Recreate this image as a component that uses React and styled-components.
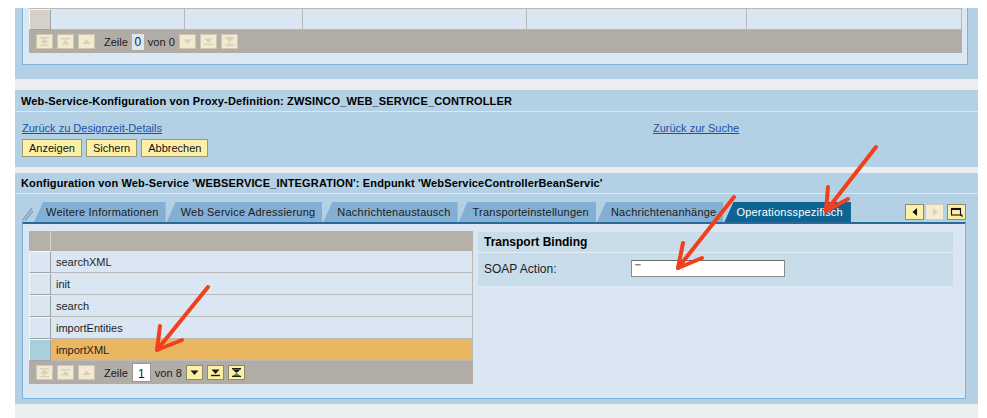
import React from "react";
import styled, { createGlobalStyle } from "styled-components";

const GlobalStyle = createGlobalStyle`
  html, body { margin: 0; padding: 0; background: #ffffff; }
  body {
    font-family: "Liberation Sans", Arial, sans-serif;
    font-size: 11px;
    color: #000;
  }
`;

const Page = styled.div`
  position: relative;
  width: 987px;
  height: 418px;
  overflow: hidden;
  padding: 8px 0 0 15px;
  box-sizing: border-box;
`;

const Column = styled.div`
  width: 963px;
  height: 100%;
  background: #eaeef1;
  display: flex;
  flex-direction: column;
`;

// ---- top (cut off) table area
const TopTray = styled.div`
  background: #b3d0e4;
  padding: 0 10px 14px 7px;
`;

const TopPanel = styled.div`
  background: #dbe7f2;
  border: 1px solid #7fb1db;
  border-top: none;
  padding: 0 5px 11px 6px;
`;

const GridRow = styled.div`
  display: grid;
  grid-template-columns: ${(p) => p.$cols};
  height: 22px;
  box-sizing: border-box;
  border-top: ${(p) => (p.$topLine ? "1px solid #b9b9b9" : "none")};
`;

const Cell = styled.div`
  box-sizing: border-box;
  height: 100%;
  background: ${(p) => p.$bg || "#dae6f2"};
  border-right: 1px solid #b9b9b9;
  border-bottom: 1px solid #b9b9b9;
  display: flex;
  align-items: center;
  padding-left: 5px;
  color: #1e1e1e;
`;

const Selector = styled.div`
  box-sizing: border-box;
  height: 100%;
  background: ${(p) => p.$bg || "#dae6f2"};
  border-top: 1px solid #f4f8fb;
  border-left: 1px solid #f4f8fb;
  border-right: 1px solid #9fa4a8;
  border-bottom: 1px solid #9fa4a8;
`;

const Pager = styled.div`
  height: 23px;
  background: #b1ada6;
  display: flex;
  align-items: center;
  padding-left: 7px;
  gap: 4px;
  color: #1a1a1a;
`;

const PagerButton = styled.div`
  box-sizing: border-box;
  width: 17px;
  height: 15px;
  border: 1px solid ${(p) => (p.$on ? "#8c8a70" : "#cdc7b6")};
  background: ${(p) => (p.$on ? "#fdf0a2" : "#f2e9d0")};
  display: flex;
  align-items: center;
  justify-content: center;
`;

const PagerLabel = styled.span`
  margin-left: ${(p) => p.$ml || 0}px;
`;

const PagerInput = styled.div`
  box-sizing: border-box;
  width: ${(p) => p.$w}px;
  height: ${(p) => p.$h}px;
  background: ${(p) => p.$bg};
  border: 1px solid ${(p) => p.$border};
  display: flex;
  align-items: flex-end;
  justify-content: center;
  font-size: 12px;
  line-height: 14px;
`;

// ---- sections
const SectionHeader = styled.div`
  margin-top: ${(p) => p.$mt}px;
  height: ${(p) => p.$h}px;
  background: #b3d0e4;
  border-bottom: 1px solid #d9e7f1;
  font-weight: bold;
  font-size: 11px;
  letter-spacing: 0.15px;
  display: flex;
  align-items: center;
  padding-left: 6px;
`;

const DesignContent = styled.div`
  height: 55px;
  box-sizing: border-box;
  background: #b3d0e4;
  padding: 10px 7px 0 7px;
`;

const LinkRow = styled.div`
  display: grid;
  grid-template-columns: 631px auto;
  height: 16px;
`;

const Link = styled.a`
  color: #1d4fa6;
  text-decoration: underline;
  cursor: pointer;
`;

const ButtonRow = styled.div`
  display: flex;
  gap: 4px;
  margin-top: 1px;
`;

const Button = styled.div`
  box-sizing: border-box;
  height: 18px;
  padding: 0 6px;
  border: 1px solid #9a9878;
  background: #fdf1a8;
  display: flex;
  align-items: center;
  color: #111;
`;

const ConfigContent = styled.div`
  height: 210px;
  box-sizing: border-box;
  background: #b3d0e4;
  padding: 8px 12px 5px 7px;
  display: flex;
  flex-direction: column;
`;

const TabStrip = styled.div`
  height: 20px;
  display: flex;
  align-items: stretch;
`;

const TabCap = styled.div`
  width: 11px;
  display: flex;
  align-items: flex-end;
`;

const Tab = styled.div`
  margin-left: 1px;
  padding: 0 ${(p) => (p.$active ? 8 : 7)}px 0 ${(p) => (p.$first || p.$active ? 12 : 14)}px;
  background: ${(p) => (p.$active ? "#0e6593" : "#84afd5")};
  color: ${(p) => (p.$active ? "#fff" : "#1a1a1a")};
  clip-path: polygon(9px 0, 100% 0, 100% 100%, 0 100%);
  letter-spacing: 0.22px;
  display: flex;
  align-items: center;
  white-space: nowrap;
`;

const TabNav = styled.div`
  margin-left: auto;
  padding-top: 2px;
  display: flex;
  gap: 1px;
`;

const NavButton = styled.div`
  box-sizing: border-box;
  width: 19px;
  height: 16px;
  margin-left: ${(p) => p.$ml || 0}px;
  border: 1px solid ${(p) => (p.$on ? "#8f8c6c" : "#d3ccb4")};
  background: ${(p) => (p.$on ? "#fdf0a6" : "#f3ebd2")};
  display: flex;
  align-items: center;
  justify-content: center;
`;

const TabPanel = styled.div`
  flex: 1;
  background: #dae6f2;
  border: 1px solid #7fb1db;
  border-top: 2px solid #2a6a98;
  padding: 7px 9px 0 6px;
  display: flex;
  align-items: flex-start;
  gap: 5px;
`;

const OpTable = styled.div`
  width: 444px;
`;

const HeadRow = styled.div`
  display: grid;
  grid-template-columns: 22px 1fr;
  height: 20px;
  background: #b5b0a8;
`;

const HeadCell = styled.div`
  border-right: 1px solid #d8d4cc;
  &:last-child { border-right: none; }
`;

const BindingBox = styled.div`
  width: 475px;
  margin-top: 1px;
`;

const BindingHead = styled.div`
  height: 21px;
  box-sizing: border-box;
  background: #c9dcea;
  border-bottom: 1px solid #e6eef5;
  font-weight: bold;
  font-size: 12px;
  display: flex;
  align-items: center;
  padding-left: 6px;
`;

const BindingRow = styled.div`
  height: 33px;
  box-sizing: border-box;
  background: #c9dcea;
  padding: 7px 0 0 6px;
  display: grid;
  grid-template-columns: 147px 154px;
`;

const FieldLabel = styled.span`
  padding-top: 2px;
  font-size: 12px;
  color: #1c1c1c;
`;

const TextField = styled.div`
  box-sizing: border-box;
  height: 17px;
  background: #fff;
  border: 1px solid #8a8a8a;
  border-top-color: #6d6d6d;
  padding: 0 3px;
  font-size: 8px;
  line-height: 12px;
`;

const Annotations = styled.svg`
  position: absolute;
  left: 0;
  top: 0;
  pointer-events: none;
`;

// ---- icons
const PagerIcon = ({ kind, on }) => {
  const c = on ? "#1c1c1c" : "#d8cfb4";
  const shapes = {
    first: (
      <>
        <rect x="0" y="0" width="9" height="1.4" />
        <path d="M4.5 1.6 L8.5 5 H0.5 Z" />
        <path d="M0.5 5 H8.5 L4.5 8.4 Z" opacity="0.6" />
        <rect x="0" y="8" width="9" height="1" />
      </>
    ),
    pageUp: (
      <>
        <rect x="0" y="1" width="9" height="1.4" />
        <path d="M4.5 3 L8.5 7.5 H0.5 Z" />
      </>
    ),
    up: <path d="M4.5 2.5 L8.5 7 H0.5 Z" />,
    down: <path d="M0.5 2.5 H8.5 L4.5 7 Z" />,
    pageDown: (
      <>
        <path d="M0.5 1.5 H8.5 L4.5 6 Z" />
        <rect x="0" y="6.8" width="9" height="1.4" />
      </>
    ),
    last: (
      <>
        <rect x="0" y="0" width="9" height="1.4" />
        <path d="M0.5 1.6 H8.5 L4.5 5 Z" />
        <path d="M4.5 5 L8.5 8 H0.5 Z" opacity="0.6" />
        <rect x="0" y="7.8" width="9" height="1.2" />
      </>
    ),
  };
  return (
    <svg width="9" height="9" viewBox="0 0 9 9" fill={c}>
      {shapes[kind]}
    </svg>
  );
};

const PagerBar = ({ total, on, input }) => (
  <Pager>
    <PagerButton><PagerIcon kind="first" /></PagerButton>
    <PagerButton><PagerIcon kind="pageUp" /></PagerButton>
    <PagerButton><PagerIcon kind="up" /></PagerButton>
    <PagerLabel $ml={5}>Zeile</PagerLabel>
    {input}
    <PagerLabel>von {total}</PagerLabel>
    <PagerButton $on={on}><PagerIcon kind="down" on={on} /></PagerButton>
    <PagerButton $on={on}><PagerIcon kind="pageDown" on={on} /></PagerButton>
    <PagerButton $on={on}><PagerIcon kind="last" on={on} /></PagerButton>
  </Pager>
);

const Arrow = ({ from, tip, armA, armB }) => (
  <g>
    <line x1={from[0]} y1={from[1]} x2={tip[0]} y2={tip[1]} />
    <polyline points={`${armA[0]},${armA[1]} ${tip[0]},${tip[1]} ${armB[0]},${armB[1]}`} fill="none" />
  </g>
);

const operations = ["searchXML", "init", "search", "importEntities", "importXML"];
const tabs = [
  "Weitere Informationen",
  "Web Service Adressierung",
  "Nachrichtenaustausch",
  "Transporteinstellungen",
  "Nachrichtenanhänge",
];

export default function App() {
  return (
    <>
      <GlobalStyle />
      <Page>
        <Column>
          <TopTray>
            <TopPanel>
              <GridRow $topLine $cols="22px 134px 118px 224px 220px 1fr">
                <Selector $bg="#d5d1c9" />
                <Cell />
                <Cell />
                <Cell />
                <Cell />
                <Cell />
              </GridRow>
              <PagerBar
                total={0}
                on={false}
                input={
                  <PagerInput $w={12} $h={16} $bg="#dbe7f2" $border="#dbe7f2">
                    0
                  </PagerInput>
                }
              />
            </TopPanel>
          </TopTray>

          <SectionHeader $mt={11} $h={21}>
            Web-Service-Konfiguration von Proxy-Definition: ZWSINCO_WEB_SERVICE_CONTROLLER
          </SectionHeader>
          <DesignContent>
            <LinkRow>
              <Link>Zurück zu Designzeit-Details</Link>
              <Link>Zurück zur Suche</Link>
            </LinkRow>
            <ButtonRow>
              <Button>Anzeigen</Button>
              <Button>Sichern</Button>
              <Button>Abbrechen</Button>
            </ButtonRow>
          </DesignContent>

          <SectionHeader $mt={6} $h={20}>
            Konfiguration von Web-Service 'WEBSERVICE_INTEGRATION': Endpunkt 'WebServiceControllerBeanServic'
          </SectionHeader>
          <ConfigContent>
            <TabStrip>
              <TabCap>
                <svg width="11" height="20" viewBox="0 0 11 20">
                  <path d="M0 19 L10 6 M3 19 L11 9" stroke="#7f9fbc" strokeWidth="1.3" />
                </svg>
              </TabCap>
              {tabs.map((t, i) => (
                <Tab key={t} $first={i === 0}>
                  {t}
                </Tab>
              ))}
              <Tab $active>Operationsspezifisch</Tab>
              <TabNav>
                <NavButton $on>
                  <svg width="6" height="8" viewBox="0 0 6 8">
                    <path d="M5 0 L0.5 4 L5 8 Z" fill="#111" />
                  </svg>
                </NavButton>
                <NavButton>
                  <svg width="6" height="8" viewBox="0 0 6 8">
                    <path d="M1 0 L5.5 4 L1 8 Z" fill="#ddd3b4" />
                  </svg>
                </NavButton>
                <NavButton $on $ml={2}>
                  <svg width="13" height="11" viewBox="0 0 13 11">
                    <rect x="1.5" y="1.5" width="9" height="6.5" fill="#fdf0a6" stroke="#111" strokeWidth="1.1" />
                    <rect x="1.5" y="1.5" width="9" height="1.5" fill="#111" />
                    <path d="M9.5 7.5 L12.5 7.5 L12.5 10.5 Z" fill="#111" />
                  </svg>
                </NavButton>
              </TabNav>
            </TabStrip>
            <TabPanel>
              <OpTable>
                <HeadRow>
                  <HeadCell />
                  <HeadCell />
                </HeadRow>
                {operations.map((op) => {
                  const sel = op === "importXML";
                  return (
                    <GridRow key={op} $cols="22px 1fr">
                      <Selector $bg={sel ? "#a7d0dc" : "#dae6f2"} />
                      <Cell $bg={sel ? "#ebb662" : "#dae6f2"}>{op}</Cell>
                    </GridRow>
                  );
                })}
                <PagerBar
                  total={8}
                  on
                  input={
                    <PagerInput $w={19} $h={19} $bg="#ffffff" $border="#9a978e">
                      1
                    </PagerInput>
                  }
                />
              </OpTable>
              <BindingBox>
                <BindingHead>Transport Binding</BindingHead>
                <BindingRow>
                  <FieldLabel>SOAP Action:</FieldLabel>
                  <TextField>""</TextField>
                </BindingRow>
              </BindingBox>
            </TabPanel>
          </ConfigContent>
        </Column>

        <Annotations width="987" height="418" stroke="#f2401c" strokeWidth="4" strokeLinecap="round" strokeLinejoin="round">
          <Arrow from={[876, 147]} tip={[826, 211]} armA={[828, 187]} armB={[848, 199]} />
          <Arrow from={[734, 197]} tip={[678, 268]} armA={[683, 243]} armB={[702, 258]} />
          <Arrow from={[208, 287]} tip={[157, 350]} armA={[160, 326]} armB={[182, 340]} />
        </Annotations>
      </Page>
    </>
  );
}
